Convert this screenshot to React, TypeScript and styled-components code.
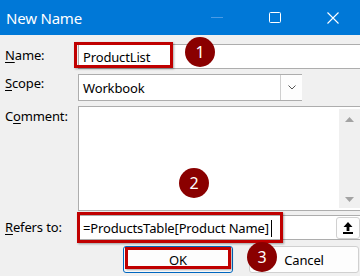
import React from "react";
import styled, { createGlobalStyle } from "styled-components";

const GlobalStyle = createGlobalStyle`
  html, body {
    margin: 0;
    padding: 0;
    width: 360px;
    height: 276px;
    overflow: hidden;
    background: #f0f0f0;
  }
  * {
    box-sizing: border-box;
  }
`;

const FONT = `"Noto Sans", "Segoe UI", "Liberation Sans", sans-serif`;

const Window = styled.div`
  position: relative;
  width: 362px;
  height: 276px;
  background: #f0f0f0;
  font-family: ${FONT};
  color: #000;
`;

const TitleBar = styled.div`
  height: 35px;
  background: #0078d7;
  display: flex;
  align-items: center;
  padding-left: 6px;
`;

const Title = styled.div`
  flex: 1;
  color: #fff;
  font-size: 15px;
  letter-spacing: -0.2px;
`;

const Control = styled.div`
  width: 58px;
  height: 35px;
  display: flex;
  align-items: center;
  justify-content: center;
`;

const Body = styled.div`
  padding: 9px 0 0 5px;
  display: flex;
  flex-direction: column;
`;

const Row = styled.div<{ $mt?: number; $h: number }>`
  display: grid;
  grid-template-columns: 73px 1fr;
  height: ${(p) => p.$h}px;
  margin-top: ${(p) => p.$mt ?? 0}px;
`;

const Label = styled.div<{ $top: number }>`
  font-size: 13px;
  letter-spacing: -0.15px;
  padding-top: ${(p) => p.$top}px;
  line-height: 16px;
  white-space: nowrap;
  u {
    text-decoration-thickness: 1px;
    text-underline-offset: 2px;
  }
`;

const Field = styled.div`
  position: relative;
  background: #fff;
  border: 1px solid #adadad;
  display: flex;
  align-items: center;
  padding-left: 4px;
  font-size: 13px;
  letter-spacing: -0.15px;
  white-space: nowrap;
`;

const DropButton = styled.div`
  position: absolute;
  left: 201px;
  top: 0;
  width: 22px;
  height: 25px;
  border-left: 1px solid #cfcfcf;
  background: #fdfdfd;
  display: flex;
  align-items: center;
  justify-content: center;
`;

const ScopeField = styled(Field)`
  width: 224px;
`;

const CommentField = styled(Field)`
  align-items: stretch;
  justify-content: flex-end;
  padding: 2px 1px 2px 0;
`;

const ScrollTrack = styled.div`
  width: 21px;
  background: #f0f0f0;
  display: flex;
  flex-direction: column;
  justify-content: space-between;
  align-items: center;
  padding: 8px 0 6px;
`;

const Caret = styled.span`
  display: inline-block;
  width: 1px;
  height: 17px;
  background: #000;
  margin-left: 2px;
  vertical-align: -4px;
`;

const PickButton = styled.div`
  position: absolute;
  left: 257px;
  top: 1px;
  width: 24px;
  height: 22px;
  border: 1px solid #d0d0d0;
  border-radius: 3px;
  background: #fdfdfd;
  display: flex;
  align-items: center;
  justify-content: center;
`;

const Buttons = styled.div`
  display: flex;
  gap: 16px;
  margin-top: 6px;
  padding-left: 118px;
`;

const Button = styled.div<{ $primary?: boolean }>`
  width: 110px;
  height: 27px;
  border-radius: 3px;
  background: #fdfdfd;
  border: 1px solid ${(p) => (p.$primary ? "#0067c0" : "#d0d0d0")};
  display: flex;
  align-items: center;
  justify-content: center;
  font-size: 13px;
  letter-spacing: -0.15px;
`;

const Marker = styled.div<{ $x: number; $y: number; $w: number; $h: number }>`
  position: absolute;
  left: ${(p) => p.$x}px;
  top: ${(p) => p.$y}px;
  width: ${(p) => p.$w}px;
  height: ${(p) => p.$h}px;
  border: 3px solid #c00000;
  box-shadow: 1px 1px 2px rgba(0, 0, 0, 0.35);
  pointer-events: none;
`;

const Step = styled.div<{ $x: number; $y: number }>`
  position: absolute;
  left: ${(p) => p.$x}px;
  top: ${(p) => p.$y}px;
  width: 30px;
  height: 30px;
  border-radius: 50%;
  background: #8a0000;
  color: #fff;
  font-family: ${FONT};
  font-size: 16px;
  display: flex;
  align-items: center;
  justify-content: center;
`;

export default function App() {
  return (
    <>
      <GlobalStyle />
      <Window>
        <TitleBar>
          <Title>New Name</Title>
          <Control>
            <svg width="12" height="2" viewBox="0 0 12 2">
              <rect width="12" height="1" fill="#4a9be6" />
            </svg>
          </Control>
          <Control>
            <svg width="12" height="12" viewBox="0 0 12 12">
              <rect x="0.5" y="0.5" width="11" height="10" rx="1" fill="none" stroke="#fff" />
            </svg>
          </Control>
          <Control>
            <svg width="12" height="12" viewBox="0 0 12 12">
              <path d="M0.5 0.5 L11.5 11.5 M11.5 0.5 L0.5 11.5" stroke="#fff" strokeWidth="1.1" />
            </svg>
          </Control>
        </TitleBar>
        <Body>
          <Row $h={25}>
            <Label $top={3}>
              <u>N</u>ame:
            </Label>
            <Field>ProductList</Field>
          </Row>
          <Row $h={27} $mt={5}>
            <Label $top={1}>
              <u>S</u>cope:
            </Label>
            <ScopeField>
              Workbook
              <DropButton>
                <svg width="8" height="5" viewBox="0 0 8 5">
                  <path d="M0.5 0.5 L4 4 L7.5 0.5" fill="none" stroke="#555" strokeWidth="1" />
                </svg>
              </DropButton>
            </ScopeField>
          </Row>
          <Row $h={105} $mt={5}>
            <Label $top={2}>
              C<u>o</u>mment:
            </Label>
            <CommentField>
              <ScrollTrack>
                <svg width="9" height="5" viewBox="0 0 9 5">
                  <path d="M4.5 0 L9 5 L0 5 Z" fill="#a3a3a3" />
                </svg>
                <svg width="9" height="5" viewBox="0 0 9 5">
                  <path d="M0 0 L9 0 L4.5 5 Z" fill="#a3a3a3" />
                </svg>
              </ScrollTrack>
            </CommentField>
          </Row>
          <Row $h={25} $mt={4}>
            <Label $top={4}>
              <u>R</u>efers to:
            </Label>
            <Field>
              <span>
                =ProductsTable[Product Name]
                <Caret />
              </span>
              <PickButton>
                <svg width="10" height="12" viewBox="0 0 10 12">
                  <path d="M5 0 L9.5 5 L6.4 5 L6.4 9 L3.6 9 L3.6 5 L0.5 5 Z" fill="#000" />
                  <rect x="0" y="10" width="10" height="2" fill="#000" />
                </svg>
              </PickButton>
            </Field>
          </Row>
          <Buttons>
            <Button $primary>OK</Button>
            <Button>Cancel</Button>
          </Buttons>
        </Body>

        <Marker $x={74} $y={42} $w={99} $h={26} />
        <Marker $x={77} $y={212} $w={206} $h={31} />
        <Marker $x={125} $y={247} $w={106} $h={22} />

        <Step $x={185} $y={37}>1</Step>
        <Step $x={179} $y={168}>2</Step>
        <Step $x={247} $y={242}>3</Step>
      </Window>
    </>
  );
}
